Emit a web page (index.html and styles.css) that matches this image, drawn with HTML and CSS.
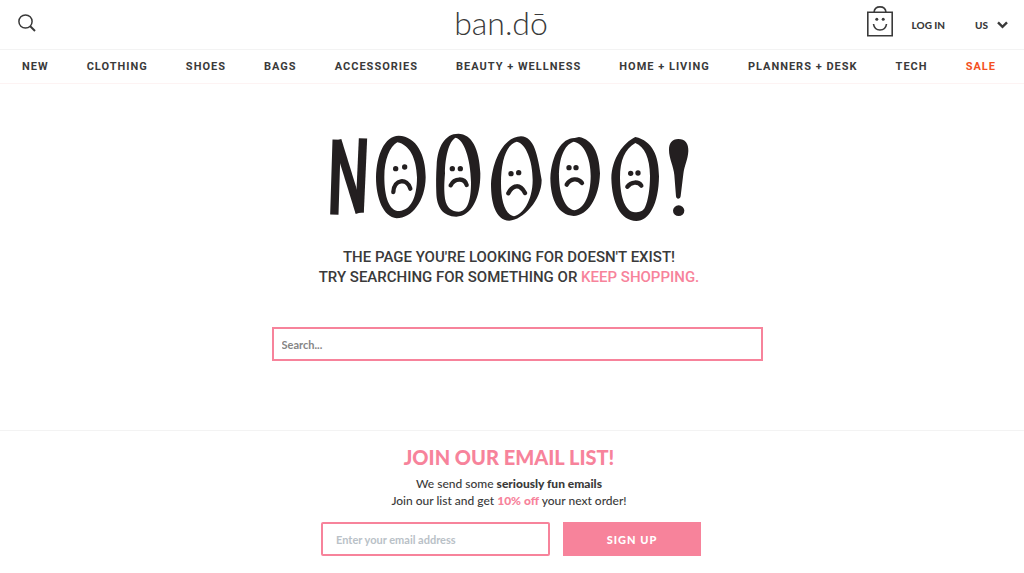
FILE: index.html
```html
<!DOCTYPE html>
<html lang="en">
<head>
<meta charset="utf-8">
<meta name="viewport" content="width=device-width, initial-scale=1">
<title>Page not found – ban.dō</title>
<link rel="stylesheet" href="styles.css">
</head>
<body>
<header class="topbar">
  <button class="icon-button" type="button" aria-label="Search">
    <svg width="18" height="18" viewBox="0 0 18 18" fill="none" stroke="currentColor"><circle cx="7.5" cy="7.5" r="6.6" stroke-width="1.5"/><path d="M12 12l5 5" stroke-width="2"/></svg>
  </button>
  <a class="logo" href="#">ban.dō</a>
  <div class="account">
    <a class="bag" href="#" aria-label="Shopping bag">
      <svg width="26" height="31" viewBox="0 0 26 31" fill="none" stroke="currentColor" stroke-width="1.6"><path d="M.8 6.3h24.4v23.4H.8zM7 6C7.500 2.500 9.500.9 13 .9S18.500 2.500 19 6"/><path d="M6.500 18c.6 4 3.200 6 6.500 6s5.900-2 6.500-6"/><g fill="currentColor" stroke="none"><circle cx="9.800" cy="13.300" r="1.500"/><circle cx="16.200" cy="13.300" r="1.500"/></g></svg>
    </a>
    <a class="login" href="#">LOG IN</a>
    <button class="region" type="button">US
      <svg width="11" height="8" viewBox="0 0 11 8" fill="none" stroke="currentColor" stroke-width="2.400"><path d="M1 1.300l4.500 4.500L10 1.300"/></svg>
    </button>
  </div>
</header>
<nav class="menu" aria-label="Main">
  <a href="#">NEW</a>
  <a href="#">CLOTHING</a>
  <a href="#">SHOES</a>
  <a href="#">BAGS</a>
  <a href="#">ACCESSORIES</a>
  <a href="#">BEAUTY + WELLNESS</a>
  <a href="#">HOME + LIVING</a>
  <a href="#">PLANNERS + DESK</a>
  <a href="#">TECH</a>
  <a class="sale" href="#">SALE</a>
</nav>
<main class="missing">
  <svg class="art" role="img" aria-label="Nooooo!" viewBox="0 0 1080 264">
    <g transform="translate(-30 -24)">
      <g stroke-width="25"><line x1="50" y1="44" x2="43" y2="269"/><line x1="52" y1="46" x2="119" y2="263"/><line x1="129" y1="40" x2="119" y2="263"/></g>
      <path class="egg" d="M236 32C290 34 317 90 317 157C316 230 275 280 230 280C190 276 168 220 168 157C170 88 193 34 236 32ZM232 52C209 64 193 105 193 155C193 215 207 258 238 258C272 256 291 218 291 157C289 98 268 59 232 52Z"/>
      <circle cx="227" cy="131" r="8"/><circle cx="254" cy="126" r="8"/>
      <path class="frown" d="M220 201C222 161 262 159 271 191"/>
    </g>
    <g transform="translate(285 -24)">
      <path class="egg" d="M100 26C140 27 163 70 166 145C167 220 138 275 94 275C53 275 35 245 34 205C33 175 33 150 35 120C38 66 59 26 100 26ZM92 38C71 48 60 100 60 145C57 180 57 200 60 221C65 249 81 260 101 260C127 259 138 229 138 172C137 100 116 43 92 38Z"/>
      <circle cx="82" cy="131" r="8"/><circle cx="106" cy="131" r="8"/>
      <path class="frown" d="M77 181C88 158 119 158 125 180"/>
      <path class="egg" d="M288 34C328 37 337 85 350 165C350 225 294 285 253 287C210 286 198 230 198 177C203 100 239 35 288 34ZM275 50C243 58 228 110 228 175C228 228 240 269 267 274C293 268 323 227 323 165C323 108 303 55 275 50Z"/>
      <circle cx="258" cy="146" r="8"/><circle cx="281" cy="143" r="8"/>
      <path class="frown" d="M250 205C264 177 286 177 300 204"/>
    </g>
    <g transform="translate(630 -24)">
      <path class="egg" d="M117 36C158 44 178 83 180 145C178 220 142 273 101 273C53 270 32 224 31 160C35 86 67 38 104 39ZM101 50C72 59 57 101 57 155C58 209 76 252 104 256C134 251 152 207 152 153C152 99 132 55 101 50Z"/>
      <circle cx="87" cy="128" r="8"/><circle cx="108" cy="128" r="8"/>
      <path class="frown" d="M80 179C91 159 115 158 126 174"/>
      <path class="egg" d="M286 36C338 48 356 92 357 154C356 238 327 288 289 288C242 288 216 235 214 160C216 100 249 54 286 36ZM286 54C255 73 240 104 240 159C241 219 256 260 285 262C298 262 309 260 315 247C325 225 330 191 330 152C329 99 314 65 286 54Z"/>
      <circle cx="272" cy="145" r="8"/><circle cx="294" cy="144" r="8"/>
      <path class="frown" d="M262 185C273 169 296 169 304 182"/>
      <path d="M415 42C436 42 446 56 445 78C444 103 433 122 430 147L422 213C421 223 409 224 408 214L403 150C401 124 387 101 387 75C387 54 396 42 415 42Z" stroke="none"/>
      <ellipse cx="416" cy="257" rx="17" ry="16"/>
    </g>
  </svg>
  <p class="message">THE PAGE YOU'RE LOOKING FOR DOESN'T EXIST!<br>TRY SEARCHING FOR SOMETHING OR <a href="#">KEEP SHOPPING.</a></p>
  <form class="search"><input type="search" aria-label="Search" placeholder="Search..."></form>
</main>
<footer class="signup">
  <h2>JOIN OUR EMAIL LIST!</h2>
  <p>We send some <strong>seriously fun emails</strong><br>Join our list and get <strong class="offer">10% off</strong> your next order!</p>
  <form class="signup-form">
    <input type="email" aria-label="Email address" placeholder="Enter your email address">
    <button type="submit">SIGN UP</button>
  </form>
</footer>
</body>
</html>
```

FILE: styles.css
```css
* { box-sizing: border-box; }
body { margin: 0; background: #fff; color: #3a3a3a; font-family: Lato, "Open Sans", sans-serif; }
a { color: inherit; text-decoration: none; }
button { padding: 0; border: 0; background: none; color: inherit; font: inherit; cursor: pointer; }
svg { display: block; }

.topbar { display: grid; grid-template-columns: 1fr auto 1fr; align-items: center; height: 50px; padding: 0 16px 0 18px; border-bottom: 1px solid #f3f3f3; }
.icon-button { justify-self: start; padding-bottom: 4px; }
.logo { padding: 0 24px 4px 0; font-size: 32px; line-height: 44px; font-weight: 300; }
.account { display: flex; justify-content: flex-end; align-items: center; font-size: 10px; font-weight: 900; }
.bag { padding-bottom: 6px; margin-right: 19px; }
.login { margin-right: 30px; }
.region { display: flex; align-items: center; gap: 9px; }

.menu { display: flex; justify-content: space-between; padding: 0 28px 0 22px; border-bottom: 1px solid #fdf3f3; font-family: Roboto, sans-serif; font-size: 11px; line-height: 33px; font-weight: 700; letter-spacing: 1px; white-space: nowrap; }
.sale { color: #f4511e; }

.missing { display: flex; flex-direction: column; align-items: center; padding: 49px 16px 69px; }
.art { width: 360px; max-width: 100%; margin-right: 4px; fill: #231f20; stroke: #231f20; stroke-width: 0; }
.egg { fill-rule: evenodd; }
.frown { fill: none; stroke-width: 13; stroke-linecap: round; }
.message { margin: 26px 6px 40px 0; font-family: Roboto, sans-serif; font-size: 15px; line-height: 20px; font-weight: 500; text-align: center; }
.message a { color: #f7839b; }
.search { width: 100%; max-width: 491px; margin-left: 10px; }
input { width: 100%; height: 34px; padding: 0 8px; border: 2px solid #f7839b; border-radius: 0; outline: 0; background: #fff; color: #353535; font: 700 11px Lato, sans-serif; }
input::placeholder { color: #858585; opacity: 1; }

.signup { padding: 15px 16px 16px 10px; border-top: 1px solid #f3f3f3; text-align: center; }
.signup h2 { margin: 0; color: #f7839b; font-size: 20px; line-height: 22px; font-weight: 900; }
.signup p { margin: 7px 0 13px; font-size: 12px; line-height: 17px; font-weight: 500; }
.signup strong { font-weight: 900; }
.signup .offer { color: #f7839b; }
.signup-form { display: flex; justify-content: center; gap: 13px; padding-left: 4px; }
.signup-form input { width: 229px; height: 34px; padding: 0 13px; border-radius: 2px; }
.signup-form input::placeholder { color: #b9c1c7; }
.signup-form button { width: 138px; background: #f7839b; color: #fff; font-size: 11px; font-weight: 900; letter-spacing: 1px; }
```
